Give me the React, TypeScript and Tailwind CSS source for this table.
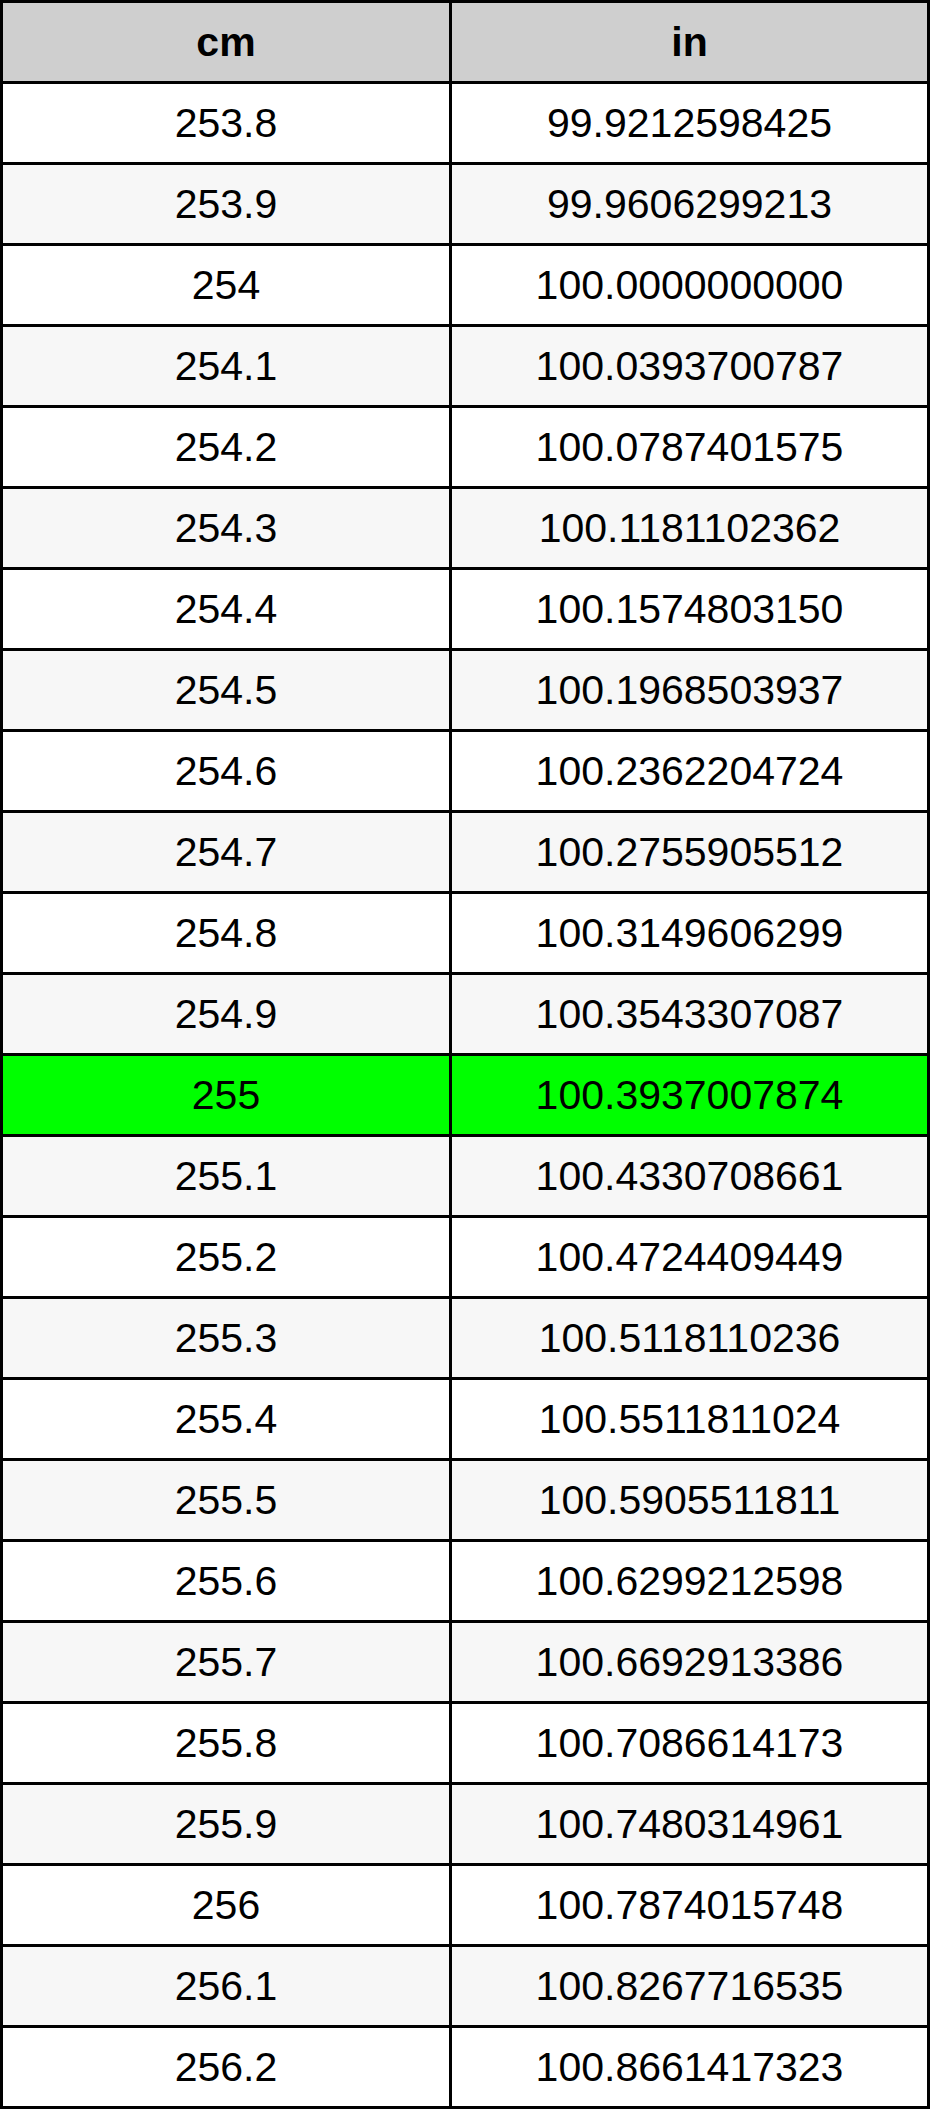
const rows: [string, string][] = [
  ["253.8", "99.9212598425"],
  ["253.9", "99.9606299213"],
  ["254", "100.0000000000"],
  ["254.1", "100.0393700787"],
  ["254.2", "100.0787401575"],
  ["254.3", "100.1181102362"],
  ["254.4", "100.1574803150"],
  ["254.5", "100.1968503937"],
  ["254.6", "100.2362204724"],
  ["254.7", "100.2755905512"],
  ["254.8", "100.3149606299"],
  ["254.9", "100.3543307087"],
  ["255", "100.3937007874"],
  ["255.1", "100.4330708661"],
  ["255.2", "100.4724409449"],
  ["255.3", "100.5118110236"],
  ["255.4", "100.5511811024"],
  ["255.5", "100.5905511811"],
  ["255.6", "100.6299212598"],
  ["255.7", "100.6692913386"],
  ["255.8", "100.7086614173"],
  ["255.9", "100.7480314961"],
  ["256", "100.7874015748"],
  ["256.1", "100.8267716535"],
  ["256.2", "100.8661417323"]
];

const Cell = ({ text, bg, bold }: { text: string; bg: string; bold?: boolean }) => (
  <div className={`h-[78px] flex items-center justify-center ${bg} ${bold ? "font-bold" : ""}`}>
    {text}
  </div>
);

const App = () => {
  return (
    <div className="w-[930px] bg-white font-['Liberation_Sans',Arial,sans-serif] text-[41px] leading-none text-black">
      <div className="grid grid-cols-[446px_475px] gap-[3px] bg-black p-[3px]">
        <Cell text="cm" bg="bg-[#cfcfcf]" bold />
        <Cell text="in" bg="bg-[#cfcfcf]" bold />
        {rows.map(([cm, inch], i) => {
          const bg = cm === "255" ? "bg-[#00ff00]" : i % 2 === 0 ? "bg-white" : "bg-[#f7f7f7]";
          return [
            <Cell key={cm + "a"} text={cm} bg={bg} />,
            <Cell key={cm + "b"} text={inch} bg={bg} />
          ];
        })}
      </div>
    </div>
  );
};

export default App;
